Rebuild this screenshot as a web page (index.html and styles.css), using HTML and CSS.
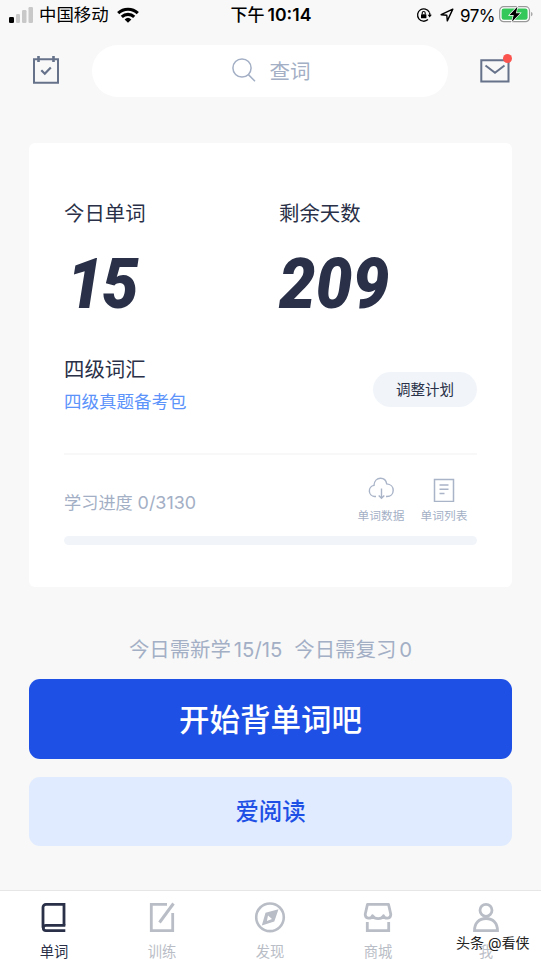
FILE: index.html
```html
<!DOCTYPE html>
<html lang="zh-CN">
<head>
<meta charset="utf-8">
<title>单词</title>
<link rel="stylesheet" href="styles.css">
</head>
<body>
<div class="app">
  <div class="status">
    <div class="status-left">
      <svg class="signal" width="24" height="16" viewBox="0 0 24 16"><rect y="10" width="5" height="6" rx="1.3" fill="#000"/><rect x="7" y="7" width="4" height="9" rx="1.2" fill="#c8c8c8"/><rect x="13" y="3" width="4.5" height="13" rx="1.2" fill="#c8c8c8"/><rect x="19.500" width="4.500" height="16" rx="1.2" fill="#c8c8c8"/></svg>
      <span class="carrier">中国移动</span>
      <svg width="22" height="16" viewBox="0 0 22 16" fill="none" stroke="#000" stroke-width="3.100"><path d="M1.200 6.200a14 14 0 0 1 19.600 0"/><path d="M4.800 9.900a9 9 0 0 1 12.400 0"/><path d="M11 15.800 7.600 12.400a5 5 0 0 1 6.800 0z" fill="#000" stroke="none"/></svg>
    </div>
    <div class="clock">下午<b>10:14</b></div>
    <div class="status-right">
      <svg width="16" height="16" viewBox="0 0 16 16"><path d="M13.300 5.200A6.200 6.200 0 1 0 12 12.600M13.400 5.500a6.200 6.200 0 0 1 .5 2.500" fill="none" stroke="#000" stroke-width="1.300"/><path d="M11.600 7.800h4.200l-2.100 2.800z"/><rect x="5" y="7.200" width="5.400" height="4" rx=".5"/><path d="M6.200 7.300V6a1.500 1.500 0 0 1 3 0v1.300" fill="none" stroke="#000" stroke-width="1.100"/></svg>
      <svg class="locate" width="14" height="14" viewBox="0 0 14 14" fill="none" stroke="#000" stroke-width="1.400" stroke-linejoin="round"><path d="M12.800 1.100 1.100 6.700l5.700.5.500 5.700z"/></svg>
      <span class="percent">97%</span>
      <svg width="35" height="17" viewBox="0 0 35 17"><rect x=".7" y=".7" width="29.800" height="15" rx="4" fill="#fff" stroke="#999" stroke-width="1.200"/><rect x="2.600" y="2.600" width="26" height="11.200" rx="2.200" fill="#34c759"/><path d="M32.200 6c1.700.5 1.700 3.800 0 4.300z" fill="#999"/><path d="M18.400.8 10.500 9h4.200L13 15.700l8.200-8.500H17z" fill="#000" stroke="#fff" stroke-width="1.300" paint-order="stroke"/></svg>
    </div>
  </div>

  <header class="top">
    <svg class="calendar" width="28" height="30" viewBox="0 0 28 30" fill="none" stroke="#65728a" stroke-width="2"><path d="M2 4.200h24v23.600H2z"/><path d="M6.500 1v6M21.500 1v6" stroke-width="2.600"/><path d="m9.300 15.200 3.500 3.500 6-6.200" stroke-width="2.200"/></svg>
    <div class="search">
      <svg width="24" height="24" viewBox="0 0 24 24" fill="none" stroke="#a3afc5" stroke-width="1.500"><circle cx="10" cy="10" r="9.100"/><path d="m16.400 16.600 6.600 6.600"/></svg>
      <span>查词</span>
    </div>
    <div class="mail">
      <svg width="30" height="24" viewBox="0 0 30 24" fill="none" stroke="#65728a" stroke-width="2"><path d="M1.300 1.300h27.200v21.200H1.300z"/><path d="m5.500 6.500 9.500 7.200 9.500-7.200"/></svg>
      <i class="dot"></i>
    </div>
  </header>

  <main class="card">
    <div class="stats">
      <div><div class="label">今日单词</div><div class="number number-today">15</div></div>
      <div><div class="label">剩余天数</div><div class="number">209</div></div>
    </div>
    <div class="plan">
      <div><div class="label">四级词汇</div><div class="pack">四级真题备考包</div></div>
      <div class="adjust">调整计划</div>
    </div>
    <div class="progress">
      <div class="progress-text">学习进度 <span class="ratio">0/3130</span></div>
      <div class="tool">
        <svg width="26" height="26" viewBox="0 0 26 26" fill="none" stroke="#a9b4c8" stroke-width="1.400"><path d="M8 20.500H6.500a5.600 5.600 0 0 1-.5-11.100C6.200 5 9 2.300 12.500 2.300c3.200 0 5.600 2 6.200 5.600 4 .3 6.500 3 6.500 6.300 0 3.700-2.600 6.300-6.200 6.300h-1"/><path d="M13.500 12.500v9.700M10.700 19.500l2.800 2.800 2.800-2.800"/></svg>
        <span>单词数据</span>
      </div>
      <div class="tool">
        <svg width="26" height="26" viewBox="0 0 26 26" fill="none" stroke="#a9b4c8" stroke-width="1.500"><path d="M3.500 3.400h19v22H3.500z"/><path d="M8.500 9h9M8.500 13.300h9M8.500 17.600h5"/></svg>
        <span>单词列表</span>
      </div>
    </div>
    <div class="bar"></div>
  </main>

  <div class="today"><span>今日需新学<span class="count">15/15</span></span><span>今日需复习<span class="count">0</span></span></div>
  <div class="button start">开始背单词吧</div>
  <div class="button read">爱阅读</div>

  <nav class="tabs">
    <div class="tab active">
      <svg width="32" height="32" viewBox="0 0 32 32" fill="none" stroke="currentColor" stroke-width="2.800"><path d="M26 24.500V3.300H8a3 3 0 0 0-3 3v20.400"/><path d="M27.300 24.300H8a2.700 2.700 0 0 0 0 5.400h19.300"/></svg>
      <span>单词</span>
    </div>
    <div class="tab">
      <svg width="32" height="32" viewBox="0 0 32 32" fill="none" stroke="currentColor" stroke-width="2.800"><path d="M21 3.300H5.300v26.400h21.400V12"/><path d="M27.500 2.500 13.500 21.500" stroke-width="3"/></svg>
      <span>训练</span>
    </div>
    <div class="tab">
      <svg width="32" height="32" viewBox="0 0 32 32"><circle cx="16" cy="16.300" r="13.800" fill="none" stroke="currentColor" stroke-width="2.600"/><path fill="currentColor" fill-rule="evenodd" d="M24.500 8.200 20.300 20.600 7.800 24.500l3.700-12.700zM14 14.500l-1.100 5.600 5.100-2.200z"/></svg>
      <span>发现</span>
    </div>
    <div class="tab">
      <svg width="32" height="32" viewBox="0 0 32 32" fill="none" stroke="currentColor" stroke-width="2.800"><path d="M5.500 3.300h21l2.300 9.900c0 5-5.600 5-7.300 1.600-2 3.800-8.600 3.800-11 0-1.700 3.400-7.300 3.400-7.300-1.600z" stroke-linejoin="round"/><path d="M5.300 21v8.700h21.400V21"/></svg>
      <span>商城</span>
    </div>
    <div class="tab">
      <svg width="32" height="32" viewBox="0 0 32 32" fill="none" stroke="currentColor" stroke-width="2.800"><circle cx="16" cy="9.300" r="6"/><path d="M4.500 29.700h23c0-7.500-4.500-12.200-11.500-12.200S4.500 22.200 4.500 29.700z"/></svg>
      <span>我</span>
    </div>
    <div class="watermark">头条 @看侠</div>
  </nav>
</div>
</body>
</html>
```
FILE: styles.css
```css
* { box-sizing: border-box; }
body {
  margin: 0;
  background: #f8f8f8;
  color: #293047;
  font-family: Inter, "Noto Sans CJK SC", sans-serif;
  white-space: nowrap;
}
svg { display: block; flex: none; }
.app { display: flex; flex-direction: column; height: 962px; overflow: hidden; }

.status {
  display: grid;
  grid-template-columns: 1fr auto 1fr;
  height: 30px;
  padding: 0 7px 0 9px;
  color: #000;
  font-size: 17px;
  line-height: 30px;
}
.status-left, .status-right { display: flex; align-items: center; height: 29px; }
.status-right { justify-content: flex-end; }
.signal { margin-right: 6px; }
.carrier { width: 78px; margin-top: 1px; font-size: 17.400px; }
.clock { margin-left: -1px; font-weight: 500; }
.clock b { margin-left: 3px; font-weight: 600; font-size: 17.600px; }
.locate { margin: 0 6px 0 8px; }
.percent { width: 39px; margin-top: 2px; letter-spacing: -0.500px; }

.top {
  display: flex;
  align-items: center;
  height: 52px;
  margin-top: 15px;
  padding: 0 31px 0 32px;
}
.calendar { margin-top: -2px; }
.search {
  display: flex;
  align-items: center;
  justify-content: center;
  gap: 14px;
  width: 356px;
  height: 52px;
  margin-left: 32px;
  padding-left: 2px;
  border-radius: 26px;
  background: #fff;
  color: #a3afc5;
  font-size: 20.500px;
}
.search span { line-height: 30px; margin-top: 1px; }
.search svg { margin-top: -2px; }
.mail { position: relative; margin: -1px 0 0 32px; }
.dot {
  position: absolute;
  top: -5px;
  right: -2px;
  width: 9px;
  height: 9px;
  border-radius: 50%;
  background: #fb544f;
}

.card {
  height: 444px;
  margin: 46px 29px 0;
  padding: 56px 35px 0;
  border-radius: 6px;
  background: #fff;
}
.stats { display: grid; grid-template-columns: 215px 1fr; height: 156px; }
.label { height: 30px; font-size: 20.400px; line-height: 30px; }
.number {
  height: 60px;
  margin-top: 25px;
  font: italic 900 70px/60px Roboto, sans-serif;
  letter-spacing: 0.300px;
  transform: scaleX(0.930);
  transform-origin: 0 50%;
}
.number-today { padding-left: 3px; letter-spacing: -1.500px; }
.plan { display: flex; justify-content: space-between; height: 100px; border-bottom: 2px solid #f8f8f8; }
.pack { height: 30px; margin-top: 2px; color: #5b93fb; font-size: 17.500px; line-height: 30px; }
.adjust {
  width: 104px;
  height: 35px;
  margin-top: 17px;
  border-radius: 18px;
  background: #f1f5fa;
  font-size: 14.500px;
  line-height: 35px;
  text-align: center;
}
.progress { display: flex; height: 81px; color: #a3afc5; }
.progress-text { flex: 1; font-size: 17.200px; line-height: 96px; }
.ratio { font-size: 17.900px; }
.tool {
  display: flex;
  flex-direction: column;
  align-items: center;
  width: 63px;
  padding-top: 21px;
  font-size: 11.700px;
  line-height: 28px;
}
.tool:last-child { margin-right: 1.500px; }
.bar { height: 8.500px; border-radius: 5px; background: #f1f5fa; }

.today {
  display: flex;
  justify-content: center;
  gap: 12px;
  height: 30px;
  margin-top: 48px;
  color: #a3afc5;
  font-size: 20.400px;
  line-height: 30px;
}
.count { margin-left: 3px; font-size: 20.300px; }
.button { margin: 0 29px; border-radius: 11px; text-align: center; font-weight: 500; }
.start { height: 80px; margin-top: 14px; background: #1e50e6; color: #fff; font-size: 30.500px; line-height: 82px; }
.read { height: 69px; margin-top: 18px; background: #e0ebff; color: #1e50e6; font-size: 23.400px; line-height: 70px; }

.tabs {
  position: relative;
  display: grid;
  grid-template-columns: repeat(5, 1fr);
  height: 72px;
  margin-top: auto;
  padding-right: 1px;
  border-top: 1px solid #e6e6e6;
  background: #fff;
}
.tab {
  display: flex;
  flex-direction: column;
  align-items: center;
  padding-top: 10px;
  color: #b9bdc6;
  font-size: 14.300px;
  line-height: 37px;
}
.active { color: #293047; }
.watermark {
  position: absolute;
  left: 456px;
  top: 42px;
  color: #222;
  font-size: 14px;
  line-height: 20px;
  text-shadow: 1px 1px 0 #fff, -1px -1px 0 #fff;
}
```
